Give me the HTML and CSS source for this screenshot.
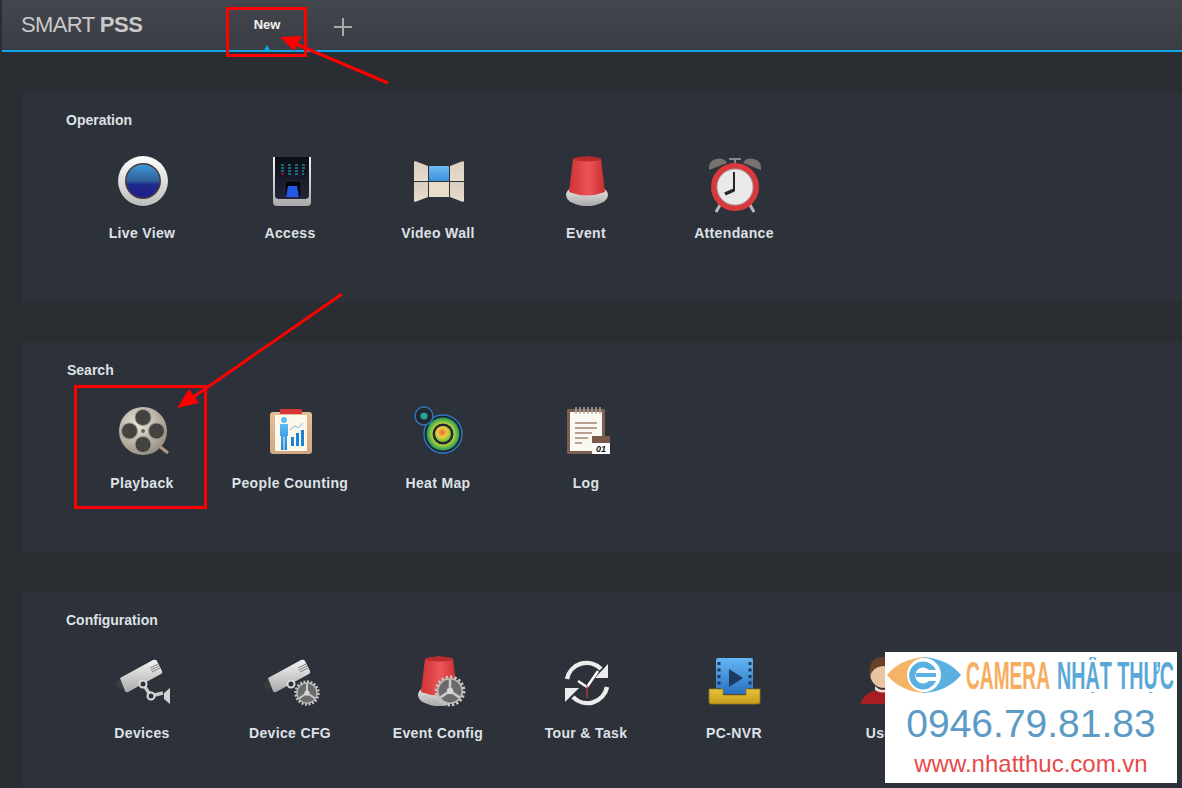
FILE: index.html
```html
<!DOCTYPE html>
<html lang="en">
<head>
    <meta charset="UTF-8">
    <meta name="viewport" content="width=device-width, initial-scale=1.0">
    <title>SMART PSS</title>
    <link rel="stylesheet" href="styles.css">
</head>
<body>
    <!-- shared gradients and shapes for the icons -->
    <svg class="defs" width="0" height="0">
        <defs>
            <linearGradient id="silver" x1="0" y1="0" x2="0" y2="1"><stop offset="0" stop-color="#f4f4f4"/><stop offset="1" stop-color="#a9a9a9"/></linearGradient>
            <linearGradient id="ring" x1="0" y1="0" x2="0" y2="1"><stop offset="0" stop-color="#ffffff"/><stop offset="1" stop-color="#bdbdbd"/></linearGradient>
            <linearGradient id="lens" x1="0" y1="0" x2="0" y2="1"><stop offset="0" stop-color="#3f96dc"/><stop offset=".5" stop-color="#2f5f96"/><stop offset=".6" stop-color="#1f2a8a"/><stop offset="1" stop-color="#1c1f8c"/></linearGradient>
            <linearGradient id="panelDark" x1="0" y1="0" x2="0" y2="1"><stop offset="0" stop-color="#0c0d16"/><stop offset="1" stop-color="#23253a"/></linearGradient>
            <linearGradient id="sky" x1="0" y1="0" x2="0" y2="1"><stop offset="0" stop-color="#6cbcf5"/><stop offset="1" stop-color="#3e8fdc"/></linearGradient>
            <linearGradient id="beige" x1="0" y1="0" x2="0" y2="1"><stop offset="0" stop-color="#d9cfc0"/><stop offset="1" stop-color="#e8dccb"/></linearGradient>
            <linearGradient id="red" x1="0" y1="0" x2="1" y2="0"><stop offset="0" stop-color="#cf3234"/><stop offset=".55" stop-color="#ec5558"/><stop offset="1" stop-color="#c92c2f"/></linearGradient>
            <linearGradient id="film" x1="0" y1="0" x2="0" y2="1"><stop offset="0" stop-color="#63b7f3"/><stop offset="1" stop-color="#2a70c0"/></linearGradient>
            <linearGradient id="gold" x1="0" y1="0" x2="0" y2="1"><stop offset="0" stop-color="#e8c33a"/><stop offset="1" stop-color="#c49b1a"/></linearGradient>
            <linearGradient id="wood" x1="0" y1="0" x2="0" y2="1"><stop offset="0" stop-color="#e5bd95"/><stop offset="1" stop-color="#cfa883"/></linearGradient>
            <linearGradient id="figure" x1="0" y1="0" x2="0" y2="1"><stop offset="0" stop-color="#5cbcf0"/><stop offset="1" stop-color="#1c83d8"/></linearGradient>
            <radialGradient id="reel" cx=".4" cy=".35" r=".75"><stop offset="0" stop-color="#eee8dc"/><stop offset="1" stop-color="#8d8578"/></radialGradient>
            <radialGradient id="heat" cx=".45" cy=".4" r=".6"><stop offset="0" stop-color="#f0603a"/><stop offset=".5" stop-color="#eccf3e"/><stop offset="1" stop-color="#63c23c"/></radialGradient>
            <radialGradient id="heatOuter" cx=".5" cy=".5" r=".5"><stop offset=".6" stop-color="#c9dc3a"/><stop offset="1" stop-color="#1f9a55"/></radialGradient>

            <symbol id="camera" viewBox="0 0 64 64">
                <path d="M5 36l5-7 5 9-5 3z" fill="#3a3c40"/>
                <path d="M10 29L43 11q3-1 4 1l5 10q1 2-1 3L18 43q-2 1-3-1z" fill="url(#silver)"/>
                <path d="M40 19l8-4M41 21l8-4M42 23l8-4" stroke="#7c7c7c" stroke-width="1"/>
            </symbol>
            <symbol id="gear" viewBox="0 0 32 32">
                <circle cx="16" cy="16" r="12.5" fill="none" stroke="#c4c4c4" stroke-width="4" stroke-dasharray="2.2 1.7"/>
                <circle cx="16" cy="16" r="11.5" fill="#6b6b6b" stroke="#bdbdbd" stroke-width="1.5"/>
                <path d="M16 16V5M16 16l-9 6M16 16l9 6" stroke="#c9c9c9" stroke-width="2.4"/>
                <circle cx="16" cy="16" r="3" fill="#d6d6d6"/>
            </symbol>
            <symbol id="beacon" viewBox="0 0 64 64">
                <ellipse cx="33" cy="46" rx="21" ry="11" fill="url(#silver)"/>
                <path d="M19 10q14-5 28 0l4 33q-18 7-36 0z" fill="url(#red)"/>
                <ellipse cx="33" cy="10" rx="14" ry="2.6" fill="#b92b2e"/>
            </symbol>
        </defs>
    </svg>

    <header class="topbar">
        <div class="brand">SMART <b>PSS</b></div>
        <div class="tab">New<span class="tab-mark"></span></div>
        <div class="tab-add"></div>
    </header>

    <main class="content">
        <section class="panel">
            <h2>Operation</h2>
            <div class="tiles">
                <div class="tile">
                    <svg class="icon" viewBox="0 0 64 64">
                        <circle cx="33" cy="33" r="25" fill="#17191d" opacity=".35"/>
                        <circle cx="33" cy="32" r="25" fill="url(#ring)"/>
                        <circle cx="33" cy="32" r="18" fill="#4a3a3a"/>
                        <circle cx="33" cy="32" r="16.5" fill="url(#lens)"/>
                    </svg>
                    <span>Live View</span>
                </div>
                <div class="tile">
                    <svg class="icon" viewBox="0 0 64 64">
                        <path d="M15 8h38v45q0 4-4 4H19q-4 0-4-4z" fill="url(#silver)"/>
                        <path d="M17 8h34v38q0 4-4 4H21q-4 0-4-4z" fill="url(#panelDark)"/>
                        <path d="M23 16h3M23 19h3M23 22h3M30 16h3M30 19h3M30 22h3M30 25h3M37 16h3M37 19h3M37 22h3M37 25h3M44 16h3M44 19h3M44 22h2M44 25h2" stroke="#1fc3cf" stroke-width="1"/>
                        <path d="M23 25h3" stroke="#d12a2a" stroke-width="1"/>
                        <rect x="27" y="32" width="16" height="16" fill="#05060b" stroke="#2a2b33"/>
                        <path d="M30 37h9l2 11H28z" fill="#2257e8"/>
                    </svg>
                    <span>Access</span>
                </div>
                <div class="tile">
                    <svg class="icon" viewBox="0 0 64 64">
                        <path d="M9 12l13 5v15H8V13z" fill="url(#beige)"/>
                        <path d="M8 33h14v15l-13 5-1-1z" fill="url(#beige)"/>
                        <rect x="23" y="17" width="20" height="15" rx="1" fill="url(#sky)"/>
                        <rect x="23" y="33" width="20" height="15" fill="#e8dccb"/>
                        <path d="M44 17l13-5 1 1v19H44z" fill="url(#beige)"/>
                        <path d="M44 33h14v19l-1 1-13-5z" fill="url(#beige)"/>
                    </svg>
                    <span>Video Wall</span>
                </div>
                <div class="tile">
                    <svg class="icon" viewBox="0 0 64 64"><use href="#beacon"/></svg>
                    <span>Event</span>
                </div>
                <div class="tile">
                    <svg class="icon" viewBox="0 0 64 64">
                        <path d="M7 21q-1-9 7-11t11 4z" fill="#77726d"/>
                        <path d="M59 21q1-9-7-11t-11 4z" fill="#77726d"/>
                        <path d="M27 10h12M33 10v5" stroke="#8a8a8a" stroke-width="2"/>
                        <path d="M18 56l-4 7M48 56l4 7" stroke="#b9b9b9" stroke-width="3"/>
                        <circle cx="33" cy="38" r="24" fill="#d8393c"/>
                        <circle cx="33" cy="38" r="18" fill="#e9e9e9" stroke="#a9a9a9" stroke-width="1"/>
                        <path d="M32 42V23" stroke="#26262a" stroke-width="2"/>
                        <path d="M32 41l-9 4" stroke="#26262a" stroke-width="3.4"/>
                    </svg>
                    <span>Attendance</span>
                </div>
            </div>
        </section>

        <section class="panel">
            <h2 class="nudge">Search</h2>
            <div class="tiles">
                <div class="tile">
                    <svg class="icon" viewBox="0 0 64 64">
                        <path d="M48 46l10 8" stroke="#b09a7c" stroke-width="3"/>
                        <circle cx="33" cy="32" r="24" fill="url(#reel)"/>
                        <circle cx="33" cy="18.5" r="8" fill="#45433f" stroke="#9b9a97"/>
                        <circle cx="33" cy="45.5" r="8" fill="#45433f" stroke="#9b9a97"/>
                        <circle cx="19.5" cy="32" r="8" fill="#45433f" stroke="#9b9a97"/>
                        <circle cx="46.5" cy="32" r="8" fill="#45433f" stroke="#9b9a97"/>
                        <circle cx="33" cy="32" r="2" fill="#6b655c"/>
                    </svg>
                    <span>Playback</span>
                </div>
                <div class="tile">
                    <svg class="icon" viewBox="0 0 64 64">
                        <rect x="12" y="13" width="42" height="42" rx="3" fill="url(#wood)"/>
                        <rect x="17" y="16" width="32" height="36" fill="#fdf8ec"/>
                        <rect x="22" y="10" width="22" height="5" rx="1" fill="#d8343a"/>
                        <circle cx="26" cy="21" r="3" fill="#5cbcf0"/>
                        <path d="M22 25h8v12h-1v14h-2.5V38h-1v13H23V37h-1z" fill="url(#figure)"/>
                        <path d="M33 38h3v9h-3zM38 34h3v13h-3zM43 31h3v16h-3z" fill="#1c83d8"/>
                        <path d="M32 31l5-4 3 2 5-5" fill="none" stroke="#7fb8dc" stroke-width="1"/>
                    </svg>
                    <span>People Counting</span>
                </div>
                <div class="tile">
                    <svg class="icon" viewBox="0 0 64 64">
                        <circle cx="37" cy="35" r="19" fill="#1c2230" stroke="#2f78c0" stroke-width="1.4"/>
                        <path d="M19 12l14-2 14 10-24 8z" fill="#2fa04a" opacity=".0"/>
                        <circle cx="37" cy="35" r="16.5" fill="url(#heatOuter)"/>
                        <circle cx="37" cy="35" r="10.5" fill="#24262c"/>
                        <circle cx="37" cy="35" r="8" fill="url(#heat)"/>
                        <circle cx="18" cy="17" r="9" fill="#23262d" stroke="#2f78c0" stroke-width="1.4"/>
                        <circle cx="18" cy="17" r="3.6" fill="#23a39a"/>
                    </svg>
                    <span>Heat Map</span>
                </div>
                <div class="tile">
                    <svg class="icon" viewBox="0 0 64 64">
                        <rect x="13" y="10" width="38" height="45" rx="1" fill="#7c5f52"/>
                        <rect x="16" y="13" width="32" height="39" fill="#faf8f3"/>
                        <path d="M22 8v7M26 8v7M30 8v7M34 8v7M38 8v7M42 8v7M46 8v7" stroke="#b5aca6" stroke-width="1.4"/>
                        <path d="M21 24h22M21 29h22M21 34h17M21 39h13M21 44h7" stroke="#b79f92" stroke-width="2"/>
                        <rect x="38" y="37" width="18" height="18" fill="#fff"/>
                        <rect x="38" y="37" width="18" height="7" fill="#7c5a4a"/>
                        <text class="date" x="47" y="53">01</text>
                    </svg>
                    <span>Log</span>
                </div>
            </div>
        </section>

        <section class="panel">
            <h2>Configuration</h2>
            <div class="tiles">
                <div class="tile">
                    <svg class="icon" viewBox="0 0 64 64">
                        <use href="#camera" width="64" height="64"/>
                        <path d="M33 35l8 12 12-3" fill="none" stroke="#c9c9c9" stroke-width="3.4"/>
                        <path d="M60 39v16l-6-5v-6z" fill="#d2d2d2"/>
                        <circle cx="33" cy="35" r="3.5" fill="#2d3139" stroke="#dcdcdc" stroke-width="2"/>
                        <circle cx="41" cy="47" r="3.5" fill="#2d3139" stroke="#dcdcdc" stroke-width="2"/>
                    </svg>
                    <span>Devices</span>
                </div>
                <div class="tile">
                    <svg class="icon" viewBox="0 0 64 64">
                        <use href="#camera" width="64" height="64"/>
                        <circle cx="33" cy="35" r="3.5" fill="#2d3139" stroke="#dcdcdc" stroke-width="2"/>
                        <use href="#gear" x="35" y="30" width="28" height="28"/>
                    </svg>
                    <span>Device CFG</span>
                </div>
                <div class="tile">
                    <svg class="icon" viewBox="0 0 64 64">
                        <use href="#beacon"/>
                        <use href="#gear" x="27" y="25" width="34" height="34"/>
                    </svg>
                    <span>Event Config</span>
                </div>
                <div class="tile">
                    <svg class="icon" viewBox="0 0 64 64">
                        <path d="M13 30A20 20 0 0 1 47 20" fill="none" stroke="#ececec" stroke-width="4.5"/>
                        <path d="M54 15v14H41z" fill="#ececec"/>
                        <path d="M53 38A20 20 0 0 1 19 48" fill="none" stroke="#ececec" stroke-width="4.5"/>
                        <path d="M11 53V39h14z" fill="#ececec"/>
                        <path d="M33 38l11-16" stroke="#fff" stroke-width="2.4"/>
                        <path d="M33 38l-9-6" stroke="#fff" stroke-width="2.4"/>
                        <path d="M33 36v13" stroke="#e23a3a" stroke-width="1"/>
                    </svg>
                    <span>Tour &amp; Task</span>
                </div>
                <div class="tile">
                    <svg class="icon" viewBox="0 0 64 64">
                        <rect x="14" y="9" width="37" height="36" rx="2" fill="url(#film)"/>
                        <path d="M17 13v28M48 13v28" stroke="#1c3a60" stroke-width="3" stroke-dasharray="3 3.5"/>
                        <path d="M27 20l14 9-14 9z" fill="#1c3a60"/>
                        <path d="M7 40h14v6h23v-6h14v13q0 2-2 2H9q-2 0-2-2z" fill="url(#gold)" stroke="#8f7a22" stroke-width=".8"/>
                    </svg>
                    <span>PC-NVR</span>
                </div>
                <div class="tile">
                    <svg class="icon" viewBox="0 0 64 64">
                        <path d="M11 55q1-12 22-15 21 3 22 15z" fill="#a81e20"/>
                        <path d="M25 37q8 8 16 0v4q-8 5-16 0z" fill="#e9e2da"/>
                        <ellipse cx="33" cy="24" rx="13" ry="15" fill="#e8c4a4"/>
                        <path d="M20 28q-3-20 13-20 16 0 13 20-2-10-13-11-11 1-13 11z" fill="#6a4028"/>
                    </svg>
                    <span>User</span>
                </div>
            </div>
        </section>
    </main>

    <!-- red annotations on top of the screenshot -->
    <svg class="marks" viewBox="0 0 1182 788">
        <rect x="227.500" y="8.500" width="78" height="47" fill="none" stroke="#f00" stroke-width="3"/>
        <rect x="75.500" y="386.500" width="130" height="121" fill="none" stroke="#f00" stroke-width="3"/>
        <path d="M388 83L296 44" stroke="#f00" stroke-width="3"/>
        <path d="M280 37l22-1-8 15z" fill="#f00"/>
        <path d="M342 294L192 398" stroke="#f00" stroke-width="3"/>
        <path d="M177 408l12-19 10 14z" fill="#f00"/>
    </svg>

    <aside class="promo">
        <div class="promo-top">
            <svg class="promo-eye" viewBox="0 0 76 38">
                <path d="M38 1Q14 3 1 19q13 16 37 18z" fill="#f5b365"/>
                <path d="M38 1q24 2 37 18-13 16-37 18z" fill="#5ab0e0"/>
                <circle cx="38" cy="19" r="17" fill="#fff"/>
                <path d="M50 14a14 14 0 1 0 0 11h-7a8 8 0 1 1 0-11z" fill="#5ab0e0"/>
                <rect x="30" y="17" width="20" height="4" fill="#5ab0e0"/>
            </svg>
            <svg class="promo-name" viewBox="0 0 208 36">
                <text x="0" y="32" textLength="84" lengthAdjust="spacingAndGlyphs" fill="#f5ad5e">CAMERA</text>
                <text x="91" y="32" textLength="117" lengthAdjust="spacingAndGlyphs" fill="#5aa8d8">NHẬT THỰC</text>
            </svg>
        </div>
        <div class="promo-phone">0946.79.81.83</div>
        <div class="promo-url">www.nhatthuc.com.vn</div>
    </aside>
</body>
</html>
```

FILE: styles.css
```css
html, body {
    margin: 0;
    padding: 0;
}

body {
    position: relative;
    width: 1182px;
    height: 788px;
    overflow: hidden;
    background-color: #2a2d32;
    font-family: "Liberation Sans", Arial, sans-serif;
    color: #dde1e6;
}

.defs {
    position: absolute;
}

.topbar {
    display: flex;
    align-items: center;
    height: 50px;
    margin-left: 2px;
    border-bottom: 2px solid #12a5ee;
    background: linear-gradient(#43464c, #3a3d43);
}

.brand {
    width: 225px;
    padding-left: 19px;
    box-sizing: border-box;
    font-size: 22px;
    letter-spacing: -0.6px;
    color: #c9c9c9;
}

.brand b {
    letter-spacing: -0.4px;
}

.tab {
    position: relative;
    width: 80px;
    height: 50px;
    line-height: 50px;
    margin-top: 0;
    text-align: center;
    font-size: 13px;
    font-weight: bold;
    color: #f2f2f2;
}

.tab-mark {
    position: absolute;
    left: 37px;
    bottom: 0;
    border: 3px solid transparent;
    border-top: 0;
    border-bottom: 5px solid #12a5ee;
}

.tab-add {
    position: relative;
    width: 18px;
    height: 18px;
    margin-left: 27px;
    margin-top: 4px;
}

.tab-add::before,
.tab-add::after {
    content: "";
    position: absolute;
    background-color: #a9a9a9;
}

.tab-add::before {
    left: 0;
    top: 8px;
    width: 18px;
    height: 2px;
}

.tab-add::after {
    left: 8px;
    top: 0;
    width: 2px;
    height: 18px;
}

.content {
    display: flex;
    flex-direction: column;
    gap: 40px;
    padding: 40px 0 0 22px;
}

.panel {
    flex: none;
    height: 210px;
    padding: 20px 0 0 44px;
    box-sizing: border-box;
    background-color: #2d3139;
}

.panel h2 {
    margin: 0;
    font-size: 14px;
    line-height: 16px;
    font-weight: bold;
    color: #dde1e6;
}

.panel h2.nudge {
    padding-left: 1px;
}

.tiles {
    display: flex;
    margin-top: 21px;
    margin-left: 2px;
}

.tile {
    flex: none;
    display: flex;
    flex-direction: column;
    align-items: center;
    width: 148px;
}

.tile span {
    margin-top: 12px;
    font-size: 14px;
    line-height: 16px;
    font-weight: bold;
    letter-spacing: 0.35px;
    white-space: nowrap;
}

.icon {
    display: block;
    width: 64px;
    height: 64px;
}

.date {
    font-size: 9px;
    font-weight: bold;
    font-style: italic;
    text-anchor: middle;
    fill: #111;
}

.marks {
    position: absolute;
    left: 0;
    top: 0;
    width: 1182px;
    height: 788px;
}

.promo {
    position: absolute;
    left: 885px;
    top: 652px;
    width: 292px;
    height: 131px;
    display: flex;
    flex-direction: column;
    align-items: center;
    background-color: #fff;
    overflow: hidden;
}

.promo-top {
    display: flex;
    align-items: center;
    align-self: stretch;
    gap: 4px;
    height: 46px;
    padding: 0 5px 0 1px;
}

.promo-eye {
    flex: none;
    width: 76px;
    height: 38px;
}

.promo-name {
    flex: none;
    width: 208px;
    height: 36px;
    font-size: 38px;
    font-weight: bold;
}

.promo-phone {
    margin-top: 4px;
    font-size: 39px;
    line-height: 44px;
    color: #5b9bc5;
}

.promo-url {
    margin-top: 4px;
    font-size: 24px;
    line-height: 28px;
    color: #e8494b;
}
```
